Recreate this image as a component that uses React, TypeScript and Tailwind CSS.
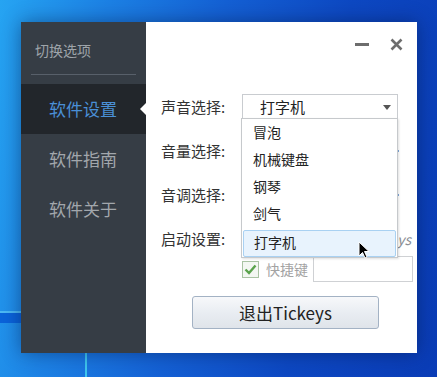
import React from "react";

const cjk = "font-['Microsoft_YaHei','Noto_Sans_CJK_SC',sans-serif]";

const sideItems = [
  { label: "软件设置", active: true },
  { label: "软件指南", active: false },
  { label: "软件关于", active: false },
];

const sounds = ["冒泡", "机械键盘", "钢琴", "剑气"];

function Sidebar() {
  return (
    <div className="flex w-[125px] shrink-0 flex-col bg-[#363d45]">
      <div className="pl-[14px] pt-[19px] text-[14px] leading-[18px] text-[#9ea4aa]">切换选项</div>
      <div className="mx-[10px] mt-[15px] h-px bg-[#58606a]" />
      <div className="mt-[9px] flex flex-col">
        {sideItems.map((it) => (
          <div
            key={it.label}
            className={
              "relative flex h-[50px] items-center pl-[28px] text-[17px] " +
              (it.active ? "bg-[#22262b] text-[#4a8fd6]" : "text-[#a2a7ac]")
            }
          >
            {it.label}
            {it.active && (
              <span className="absolute right-0 top-[19px] h-0 w-0 border-y-[6px] border-r-[6px] border-y-transparent border-r-white" />
            )}
          </div>
        ))}
      </div>
    </div>
  );
}

function Row({ label, children, className = "" }: { label: string; children?: React.ReactNode; className?: string }) {
  return (
    <div className={"flex items-center " + className}>
      <div className="w-[81px] shrink-0 text-[15px] text-[#333]">{label}</div>
      {children}
    </div>
  );
}

function Slider() {
  return (
    <div className="relative h-[4px] w-[157px]">
      <div className="absolute right-0 top-[1px] h-[2px] w-[2px] bg-[#7fa7d9]" />
    </div>
  );
}

function Cursor() {
  return (
    <svg className="absolute left-[212px] top-[219px]" width="12" height="18" viewBox="0 0 12 18">
      <path d="M1 1 L1 15 L4.5 11.5 L7 17 L9 16 L6.5 10.5 L11 10.5 Z" fill="#000" stroke="#fff" strokeWidth="1" />
    </svg>
  );
}

export default function App() {
  return (
    <div className={"relative h-[377px] w-[437px] overflow-hidden bg-[linear-gradient(100deg,#26a4f2_0%,#1c80e4_22%,#1460d4_45%,#0d48c2_70%,#0a3cb6_100%)] " + cjk}>
      <div className="absolute left-0 top-[313px] h-[10px] w-[30px] bg-[#0a63da]" />
      <div className="absolute left-0 top-[311px] h-[2px] w-[30px] bg-[#4bb8f5]" />
      <div className="absolute left-[85px] top-[340px] h-[40px] w-[2px] bg-[#3ec6ef]" />

      <div className="absolute left-[21px] top-[22px] flex h-[331px] w-[396px] shadow-[0_0_18px_rgba(0,20,60,0.45)]">
        <Sidebar />

        <div className="relative flex flex-1 flex-col bg-white pl-[15px]">
          <div className="flex h-[63px] items-start justify-end gap-[21px] pr-[14px] pt-[16px]">
            <div className="mt-[5px] h-[3px] w-[14px] bg-[#6d6d6d]" />
            <svg width="13" height="13" viewBox="0 0 13 13">
              <path d="M1.5 1.5 L11.5 11.5 M11.5 1.5 L1.5 11.5" stroke="#6d6d6d" strokeWidth="2.6" />
            </svg>
          </div>

          <Row label="声音选择:" className="h-[44px]">
            <div className="flex h-[27px] w-[156px] items-center justify-between border border-[#c9ccd0] pl-[17px] pr-[6px] text-[15px] text-[#222]">
              打字机
              <span className="h-0 w-0 border-x-[4px] border-t-[5px] border-x-transparent border-t-[#555]" />
            </div>
          </Row>
          <Row label="音量选择:" className="h-[44px]">
            <Slider />
          </Row>
          <Row label="音调选择:" className="h-[44px]">
            <Slider />
          </Row>

          <div className="mt-[10px] flex">
            <div className="flex h-[24px] w-[81px] shrink-0 items-center text-[15px] text-[#333]">启动设置:</div>
            <div className="flex flex-col gap-[5px]">
              <div className="flex h-[24px] w-[169px] items-center justify-end text-[14px] italic text-[#8a8f95]">
                开机启动Tickeys
              </div>
              <div className="flex h-[26px] items-center">
                <div className="flex h-[17px] w-[17px] items-center justify-center border border-[#a9c3a3] bg-[#f3f7f2]">
                  <svg width="13" height="11" viewBox="0 0 13 11">
                    <path d="M1.5 5.5 L5 9 L11.5 1.5" fill="none" stroke="#5aa34c" strokeWidth="2.4" />
                  </svg>
                </div>
                <span className="ml-[7px] text-[14px] text-[#a3a3a3]">快捷键</span>
                <div className="ml-[5px] h-[26px] w-[100px] border border-[#cfd1d4] bg-white" />
              </div>
            </div>
          </div>

          <button className="ml-[31px] mt-[14px] flex h-[33px] w-[187px] items-center justify-center rounded-[3px] border border-[#a3b2c4] bg-[linear-gradient(#f7f8fa,#e9edf2_50%,#dfe4ea)] text-[17px] text-[#222]">
            退出Tickeys
          </button>

          <div className="absolute left-[95px] top-[96px] flex h-[140px] w-[157px] flex-col border border-[#c6c9cc] bg-white text-[14px] text-[#222] shadow-[1px_1px_2px_rgba(0,0,0,0.12)]">
            {sounds.map((s) => (
              <div key={s} className="flex h-[27px] items-center pl-[11px]">
                {s}
              </div>
            ))}
            <div className="mx-px mt-[3px] flex h-[27px] items-center rounded-[2px] border border-[#a9d1f2] bg-[#e8f3fd] pb-[3px] pl-[10px]">
              打字机
            </div>
          </div>
          <Cursor />
        </div>
      </div>
    </div>
  );
}
